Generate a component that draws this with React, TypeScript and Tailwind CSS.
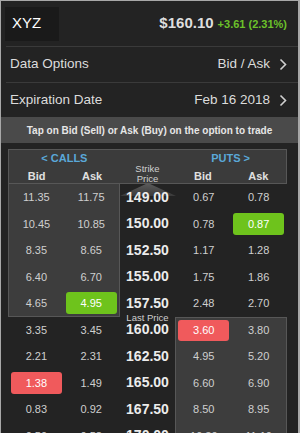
import React from 'react';

type Row = {
  strike: string;
  cb: string;
  ca: string;
  pb: string;
  pa: string;
  hl?: 'cb' | 'ca' | 'pb' | 'pa';
  hlColor?: 'green' | 'red';
};

const ROWS: Row[] = [
  { strike: '149.00', cb: '11.35', ca: '11.75', pb: '0.67', pa: '0.78' },
  { strike: '150.00', cb: '10.45', ca: '10.85', pb: '0.78', pa: '0.87', hl: 'pa', hlColor: 'green' },
  { strike: '152.50', cb: '8.35', ca: '8.65', pb: '1.17', pa: '1.28' },
  { strike: '155.00', cb: '6.40', ca: '6.70', pb: '1.75', pa: '1.86' },
  { strike: '157.50', cb: '4.65', ca: '4.95', pb: '2.48', pa: '2.70', hl: 'ca', hlColor: 'green' },
  { strike: '160.00', cb: '3.35', ca: '3.45', pb: '3.60', pa: '3.80', hl: 'pb', hlColor: 'red' },
  { strike: '162.50', cb: '2.21', ca: '2.31', pb: '4.95', pa: '5.20' },
  { strike: '165.00', cb: '1.38', ca: '1.49', pb: '6.60', pa: '6.90', hl: 'cb', hlColor: 'red' },
  { strike: '167.50', cb: '0.83', ca: '0.92', pb: '8.50', pa: '8.95' },
  { strike: '170.00', cb: '0.50', ca: '0.58', pb: '10.30', pa: '11.10' },
];

const LAST_IDX = 5; // calls ITM above, puts ITM from here

function Cell({ value, hl }: { value: string; hl?: 'green' | 'red' }) {
  if (hl) {
    return (
      <div className="flex h-full items-center justify-center p-[2px]">
        <div
          className={`flex h-full w-full items-center justify-center rounded-[3px] text-[11px] text-white ${
            hl === 'green' ? 'bg-[#6ec31c]' : 'bg-[#f05a5c]'
          }`}
        >
          {value}
        </div>
      </div>
    );
  }
  return <div className="flex h-full items-center justify-center text-[11px] text-[#cfcfcf]">{value}</div>;
}

function ChevronRight() {
  return (
    <svg width="8" height="13" viewBox="0 0 8 13" className="ml-[9px]">
      <path d="M1.5 1.5 L6.5 6.5 L1.5 11.5" fill="none" stroke="#d0d0d0" strokeWidth="1.6" />
    </svg>
  );
}

export default function App() {
  return (
    <div
      className="h-[433px] w-[300px] overflow-hidden border-l border-r-2 border-t border-[#a8a8a8] bg-[#232323]"
      style={{ fontFamily: '"Liberation Sans", Arial, sans-serif' }}
    >
      {/* header */}
      <div className="flex h-[45px] items-center justify-between pl-[4px] pr-[11px]">
        <div className="flex h-[34px] w-[54px] items-center bg-[#1a1a1a] pl-[7px] text-[15px] text-white">XYZ</div>
        <div className="flex items-baseline gap-[4px]">
          <span className="text-[15px] font-bold text-[#dedede]">$160.10</span>
          <span className="text-[11px] font-bold text-[#6cc12a]">+3.61 (2.31%)</span>
        </div>
      </div>

      <div className="ml-[5px] flex h-[36px] items-center justify-between border-t border-[#3a3a3a] pl-[4px] pr-[11px] text-[13.5px] text-[#dcdcdc]">
        <span>Data Options</span>
        <span className="flex items-center">
          Bid / Ask
          <ChevronRight />
        </span>
      </div>

      <div className="ml-[5px] flex h-[35px] items-center justify-between border-t border-[#3a3a3a] pl-[4px] pr-[11px] text-[13.5px] text-[#dcdcdc]">
        <span>Expiration Date</span>
        <span className="flex items-center">
          Feb 16 2018
          <ChevronRight />
        </span>
      </div>

      <div className="flex h-[26px] items-center justify-center bg-[#4a4a4a] text-[10px] font-bold text-[#e6e6e6]">
        Tap on Bid (Sell) or Ask (Buy) on the option to trade
      </div>

      {/* chain */}
      <div className="relative ml-[7px] mt-[6px] w-[279px]">
        <div className="grid h-[35px] grid-cols-5 border border-[#575757] bg-[#3b3b3b]">
          <div className="col-span-2 flex flex-col">
            <div className="text-center text-[11px] font-bold text-[#5aa8d8]">&lt; CALLS</div>
            <div className="mt-[1px] grid grid-cols-2 text-center text-[11px] font-bold text-[#e0e0e0]">
              <span>Bid</span>
              <span>Ask</span>
            </div>
          </div>
          <div className="flex flex-col items-center pt-[14px] text-[9.5px] leading-[10px] text-[#cfcfcf]">
            <span>Strike</span>
            <span>Price</span>
          </div>
          <div className="col-span-2 flex flex-col">
            <div className="text-center text-[11px] font-bold text-[#5aa8d8]">PUTS &gt;</div>
            <div className="mt-[1px] grid grid-cols-2 text-center text-[11px] font-bold text-[#e0e0e0]">
              <span>Bid</span>
              <span>Ask</span>
            </div>
          </div>
        </div>

        <svg className="absolute left-[112px] top-[34px]" width="56" height="14" viewBox="0 0 56 14">
          <defs>
            <linearGradient id="tri" x1="0" y1="0" x2="0" y2="1">
              <stop offset="0" stopColor="#5c5c5c" />
              <stop offset="1" stopColor="#3a3a3a" />
            </linearGradient>
          </defs>
          <polygon points="0,13 28,0 56,13" fill="url(#tri)" />
        </svg>

        {ROWS.map((r, i) => {
          const callItm = i < LAST_IDX;
          const putItm = i >= LAST_IDX;
          return (
            <div key={r.strike} className="relative grid h-[26.5px] grid-cols-5">
              <div
                className={`col-span-2 grid grid-cols-2 ${
                  callItm ? 'border-x border-[#575757] bg-[#3d3d3d]' : 'border-x border-transparent'
                } ${i === LAST_IDX - 1 ? 'border-b' : ''}`}
              >
                <Cell value={r.cb} hl={r.hl === 'cb' ? r.hlColor : undefined} />
                <Cell value={r.ca} hl={r.hl === 'ca' ? r.hlColor : undefined} />
              </div>
              <div className="relative z-10 flex items-center justify-center text-[14px] font-bold text-[#ececec]">
                {r.strike}
                {i === LAST_IDX && (
                  <span className="absolute -top-[6px] left-0 right-0 text-center text-[9.5px] font-normal text-[#cfcfcf]">
                    Last Price
                  </span>
                )}
              </div>
              <div
                className={`col-span-2 grid grid-cols-2 ${
                  putItm ? 'border-x border-[#575757] bg-[#3d3d3d]' : 'border-x border-transparent'
                } ${i === LAST_IDX ? 'border-t' : ''}`}
              >
                <Cell value={r.pb} hl={r.hl === 'pb' ? r.hlColor : undefined} />
                <Cell value={r.pa} hl={r.hl === 'pa' ? r.hlColor : undefined} />
              </div>
            </div>
          );
        })}
      </div>
    </div>
  );
}
